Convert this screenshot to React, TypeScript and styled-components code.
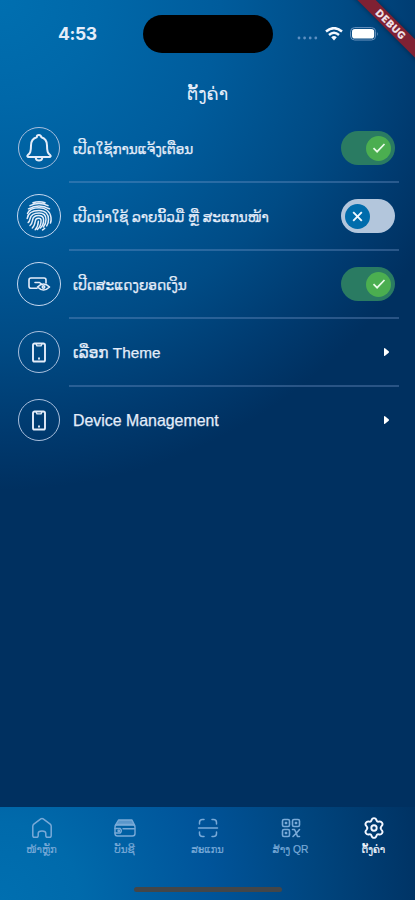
import React from "react";
import styled, { createGlobalStyle } from "styled-components";

const GlobalStyle = createGlobalStyle`
  * { box-sizing: border-box; }
  body { margin: 0; background: #003060; }
`;

const Screen = styled.div`
  position: relative;
  width: 415px;
  height: 900px;
  overflow: hidden;
  display: flex;
  flex-direction: column;
  color: #e4edfa;
  font-family: "Liberation Sans", "DejaVu Sans", sans-serif;
  background: radial-gradient(ellipse 490px 490px at 0 0, #006fb0 0%, #0068a9 20%, #005c9c 45%, #004b85 70%, #003a6f 88%, #003060 100%);
`;

const StatusBar = styled.header`
  height: 68px;
  flex: none;
  display: grid;
  grid-template-columns: 143px 130px 1fr;
  align-items: center;
`;

const Clock = styled.time`
  padding-left: 58px;
  font: 700 17.5px/20px Inter, sans-serif;
  letter-spacing: -0.4px;
`;

const Island = styled.div`
  height: 38px;
  border-radius: 19px;
  background: #000;
`;

const StatusIcons = styled.div`
  display: flex;
  align-items: center;
  gap: 7px;
  padding-left: 24px;
  svg { display: block; }
`;

const DebugRibbon = styled.div`
  position: absolute;
  top: 18px;
  right: -36px;
  width: 120px;
  height: 13px;
  transform: rotate(45deg);
  background: #7f2133;
  box-shadow: 0 0 5px rgba(0, 0, 0, 0.4);
  color: #f4e9ee;
  text-align: center;
  font: 900 9.5px/13px Lato, sans-serif;
  letter-spacing: 1px;
  -webkit-text-stroke: 0.4px #f4e9ee;
`;

const Title = styled.h1`
  margin: 0;
  height: 46px;
  flex: none;
  display: flex;
  align-items: center;
  justify-content: center;
  padding-top: 7px;
  font-weight: 400;
  font-size: 17.5px;
`;

const List = styled.main`
  flex: 1;
  display: flex;
  flex-direction: column;
`;

const Row = styled.div`
  height: 68px;
  display: flex;
  align-items: center;
  padding-left: 18px;
`;

const IconRing = styled.div<{ $strong?: boolean }>`
  width: ${(p) => (p.$strong ? 44 : 42)}px;
  height: ${(p) => (p.$strong ? 44 : 42)}px;
  margin: 0 ${(p) => (p.$strong ? -1 : 0)}px;
  flex: none;
  border-radius: 50%;
  border: 1.3px solid ${(p) => (p.$strong ? "#c6d8f0" : "#a9bfdd")};
  display: grid;
  place-items: center;
  svg { display: block; }
`;

const RowBody = styled.div<{ $last?: boolean }>`
  width: 330px;
  height: 70px;
  margin-left: 9px;
  padding: 2px 4px 0;
  flex: none;
  display: flex;
  align-items: center;
  justify-content: space-between;
  border-bottom: 2px solid ${(p) => (p.$last ? "transparent" : "rgba(120,155,205,0.34)")};
`;

const Label = styled.span<{ $size: number }>`
  font-size: ${(p) => p.$size}px;
  line-height: 24px;
  padding-top: ${(p) => (p.$size < 15 ? 3 : 1)}px;
  white-space: nowrap;
  -webkit-text-stroke: 0.25px #e4edfa;
`;

const Track = styled.div<{ $on: boolean }>`
  width: 54px;
  height: 34px;
  border-radius: 17px;
  padding: 4px;
  display: flex;
  align-items: center;
  justify-content: ${(p) => (p.$on ? "flex-end" : "flex-start")};
  background: ${(p) => (p.$on ? "#2a7b62" : "#b3c6dc")};
`;

const Thumb = styled.div<{ $on: boolean }>`
  width: 25px;
  height: 25px;
  border-radius: 50%;
  display: grid;
  place-items: center;
  background: ${(p) => (p.$on ? "#4bae50" : "#006cac")};
`;

const ArrowIcon = styled.svg`
  display: block;
  margin-right: 5px;
`;

const NavBar = styled.nav`
  height: 93px;
  flex: none;
  display: flex;
  flex-direction: column;
  justify-content: space-between;
  align-items: center;
  padding-bottom: 8px;
  background: radial-gradient(ellipse 440px 430px at 0 100%, #006fb0 0%, #006aab 18%, #00549a 48%, #00457e 72%, #003060 100%);
`;

const NavItems = styled.div`
  width: 415px;
  display: grid;
  grid-template-columns: repeat(5, 83px);
`;

const NavItem = styled.div<{ $active?: boolean }>`
  display: flex;
  flex-direction: column;
  align-items: center;
  padding-top: 10px;
  color: ${(p) => (p.$active ? "#f2f6ff" : "#79aad8")};
  svg { display: block; }
`;

const NavLabel = styled.span<{ $size: number }>`
  margin-top: 3px;
  font-size: ${(p) => p.$size}px;
  line-height: 16px;
  white-space: nowrap;
  -webkit-text-stroke: 0.2px currentColor;
`;

const HomeIndicator = styled.div`
  width: 148px;
  height: 5px;
  border-radius: 3px;
  background: #444648;
`;

const line = {
  fill: "none",
  stroke: "currentColor",
  strokeLinecap: "round" as const,
  strokeLinejoin: "round" as const,
};

const Signal = () => (
  <svg width="21" height="12" viewBox="0 0 21 12" fill="#5d8fc1">
    {[2, 7.6, 13.2, 18.8].map((x) => <circle key={x} cx={x} cy="10" r="1.4" />)}
  </svg>
);

const Wifi = () => (
  <svg width="18" height="14" viewBox="0 0 18 14" fill="none" stroke="#f4f8ff">
    <path d="M1 4.5Q9-2.2 17 4.5" strokeWidth="2.5" />
    <path d="M4 8Q9 3.6 14 8" strokeWidth="2.4" />
    <path d="M6.2 10.2Q9 8 11.8 10.2L9 13.5Z" fill="#f4f8ff" stroke="none" />
  </svg>
);

const Battery = () => (
  <svg width="29" height="14" viewBox="0 0 29 14">
    <rect x=".6" y=".6" width="25" height="12.4" rx="4" fill="none" stroke="#6a94c0" />
    <rect x="2" y="2" width="22.2" height="9.6" rx="2.8" fill="#fff" />
    <path d="M27.2 5q1.4 2 0 4z" fill="#7fa5cc" />
  </svg>
);

const Bell = () => (
  <svg width="26" height="30" viewBox="0 0 26 30" {...line} strokeWidth="2">
    <path d="M10.7 4.3a2.3 2.3 0 0 1 4.6 0C19.3 5.5 21 8.5 21 12.5c0 6 .8 7.6 3.2 9.600 .9 1 .4 2-.8 2H2.600c-1.200 0-1.700-1-.8-2C4.200 20.100 5 18.500 5 12.500c0-4 1.700-7 5.700-8.200" />
    <path d="M9.800 25.200c.5 3.200 5.900 3.200 6.400 0" />
  </svg>
);

const Fingerprint = () => (
  <svg width="28" height="32" viewBox="0 0 28 32" {...line} strokeWidth="1.5">
    <path d="M8 2.800Q14 .6 20 2.800M5 5.600Q14 1.600 23 5.600M3.500 8.800Q14 3.200 24.500 8.800" />
    <path d="M2.500 13.500C4 9.500 8.500 7.800 14 7.800s11 2.700 12 9.700q.4 3-.5 5.500" />
    <path d="M2.200 18.500C3 12.500 8 10.400 14 10.400c6.500 0 9.500 4 9.500 9 0 3-.8 5-1.800 6.500" />
    <path d="M3.200 22.500c1.300-.8 1.500-2 1.800-3.500.8-4.200 4.500-6 9-6 4.800 0 7 2.800 7 6.400 0 3-1 5.500-2.700 7.600" />
    <path d="M5 25.500c2-1.400 2.200-3.200 2.600-5.500.5-3 3-4.400 6-4.400 3.300 0 5 1.600 5 4.400s-1 6-3.200 8" />
    <path d="M7.300 28c2.300-2 2.600-4.400 3-7 .3-1.800 1.500-2.700 3.200-2.700 1.600 0 2.600.8 2.600 2.200 0 3-.9 6.500-3.700 9M10.200 29.800c2.300-2.400 3-5.300 3.200-8.600M17.500 30q1.200-.6 2.200-1.700" />
  </svg>
);

const Balance = () => (
  <svg width="24" height="16" viewBox="0 0 24 16" {...line} strokeWidth="1.6">
    <path d="M10 12.200H4a2 2 0 0 1-2-2V4a2 2 0 0 1 2-2h13a2 2 0 0 1 2 2v3" />
    <path d="M8 6.500h4.500l2.500 2" />
    <path d="M10.500 11q6-6 12 0-6 6-12 0z" />
    <circle cx="16.500" cy="11" r="1.200" />
  </svg>
);

const Phone = () => (
  <svg width="16" height="21" viewBox="0 0 16 21" {...line} strokeWidth="1.9">
    <rect x="2" y="1.500" width="12" height="18" rx="1.600" />
    <path d="M5.200 2.200l.8 1.700h4l.8-1.700" strokeWidth="1.400" />
    <path d="M8 16.300v.4" />
  </svg>
);

const Check = () => (
  <svg width="14" height="12" viewBox="0 0 14 12" fill="none" stroke="#eafbe9" strokeWidth="1.700">
    <path d="M1.500 6.200l3.600 3.500L12.500 2" />
  </svg>
);

const Cross = () => (
  <svg width="11" height="11" viewBox="0 0 11 11" stroke="#f1f8ff" strokeWidth="1.900">
    <path d="M1.200 1.200l8.600 8.600M9.800 1.200L1.200 9.800" />
  </svg>
);

const Arrow = () => (
  <ArrowIcon width="7" height="10" viewBox="0 0 7 10" fill="#fff">
    <path d="M1 1.600Q1 .8 2 1.200L5.700 4.300Q6.400 5 5.700 5.700L2 8.800Q1 9.200 1 8.400Z" />
  </ArrowIcon>
);

const HomeIcon = () => (
  <svg width="22" height="22" viewBox="0 0 22 22" {...line} strokeWidth="1.500">
    <path d="M4.500 20.300H3.300A1.500 1.500 0 0 1 1.800 18.800V9.200q0-1.200 1-2L9.800 1.900q1.200-.9 2.400 0l7 5.300q1 .8 1 2v9.600a1.500 1.500 0 0 1-1.500 1.500h-2.400a1.500 1.500 0 0 1-1.500-1.500v-2.300q0-2.500-3.800-2.500t-3.800 2.500v2.300a1.500 1.500 0 0 1-1.500 1.500Z" />
  </svg>
);

const CardsIcon = () => (
  <svg width="24" height="22" viewBox="0 0 24 22" {...line} strokeWidth="1.400">
    <path d="M5.500 3H19l2.500 5h-19z" fill="currentColor" fillOpacity=".75" />
    <rect x="2" y="7.500" width="20" height="11.500" rx="2.500" />
    <path d="M2 11.500h5.200q2.300 2.200 0 4.500H2M10 11.800h11.500" />
    <circle cx="5.800" cy="13.800" r=".8" />
  </svg>
);

const ScanIcon = () => (
  <svg width="22" height="22" viewBox="0 0 22 22" {...line} strokeWidth="1.500">
    <path d="M2.500 7V5.500q0-3 3-3H7M15 2.500h1.500q3 0 3 3V7M19.500 15v1.500q0 3-3 3H15M7 19.500H5.500q-3 0-3-3V15M1.500 11h19" />
  </svg>
);

const QrIcon = () => (
  <svg width="22" height="22" viewBox="0 0 22 22" {...line} strokeWidth="1.600">
    <rect x="2.500" y="2.500" width="7" height="7" rx="1.500" />
    <rect x="12.500" y="2.500" width="7" height="7" rx="1.500" />
    <rect x="2.500" y="12.500" width="7" height="7" rx="1.500" />
    <path d="M5.500 5.500h1v1h-1zM15.500 5.500h1v1h-1zM5.500 15.500h1v1h-1zM12.500 12.500h2l1.500 3 1.500 4h2M19.500 12.500l-3 3.500-3.500 3.500" />
  </svg>
);

const GearIcon = () => (
  <svg width="22" height="22" viewBox="0 0 22 22" {...line} strokeWidth="1.900">
    <path d="M8.400 3.500Q9 1.100 11 1.100t2.600 2.400l.6 1.100 1.300.1q2.400-.7 3.600 1.100t-.8 3.600L17.600 11l.7 1.600q2 1.800.8 3.600t-3.600 1.100l-1.300.1-.6 1.100Q13 20.900 11 20.900t-2.600-2.400l-.6-1.100-1.300-.1q-2.400.7-3.600-1.100t.8-3.600L4.400 11l-.7-1.600q-2-1.800-.8-3.600t3.600-1.100l1.300-.1z" />
    <circle cx="11" cy="11" r="2.700" />
  </svg>
);

const rows = [
  { text: "ເປີດໃຊ້ການແຈ້ງເຕືອນ", size: 13.6, icon: <Bell />, toggle: true },
  { text: "ເປີດນຳໃຊ້ ລາຍນິ້ວມື ຫຼື ສະແກນໜ້າ", size: 13.5, icon: <Fingerprint />, toggle: false },
  { text: "ເປີດສະແດງຍອດເງິນ", size: 13.7, icon: <Balance />, toggle: true },
  { text: "ເລືອກ Theme", size: 15.3, icon: <Phone /> },
  { text: "Device Management", size: 15.9, icon: <Phone /> },
];

const tabs = [
  { text: "ໜ້າຫຼັກ", size: 10, icon: <HomeIcon /> },
  { text: "ບັນຊີ", size: 10.4, icon: <CardsIcon /> },
  { text: "ສະແກນ", size: 9.8, icon: <ScanIcon /> },
  { text: "ສ້າງ QR", size: 10.3, icon: <QrIcon /> },
  { text: "ຕັ້ງຄ່າ", size: 10, icon: <GearIcon />, active: true },
];

const Toggle = ({ on }: { on: boolean }) => (
  <Track $on={on}>
    <Thumb $on={on}>{on ? <Check /> : <Cross />}</Thumb>
  </Track>
);

export default function App() {
  return (
    <>
      <GlobalStyle />
      <Screen>
        <StatusBar>
          <Clock>4:53</Clock>
          <Island />
          <StatusIcons><Signal /><Wifi /><Battery /></StatusIcons>
        </StatusBar>
        <DebugRibbon>DEBUG</DebugRibbon>
        <Title>ຕັ້ງຄ່າ</Title>
        <List>
          {rows.map((r, i) => (
            <Row key={r.text}>
              <IconRing $strong={i === 1 || i === 2}>{r.icon}</IconRing>
              <RowBody $last={i === rows.length - 1}>
                <Label $size={r.size}>{r.text}</Label>
                {r.toggle === undefined ? <Arrow /> : <Toggle on={r.toggle} />}
              </RowBody>
            </Row>
          ))}
        </List>
        <NavBar>
          <NavItems>
            {tabs.map((t) => (
              <NavItem key={t.text} $active={t.active}>
                {t.icon}
                <NavLabel $size={t.size}>{t.text}</NavLabel>
              </NavItem>
            ))}
          </NavItems>
          <HomeIndicator />
        </NavBar>
      </Screen>
    </>
  );
}
